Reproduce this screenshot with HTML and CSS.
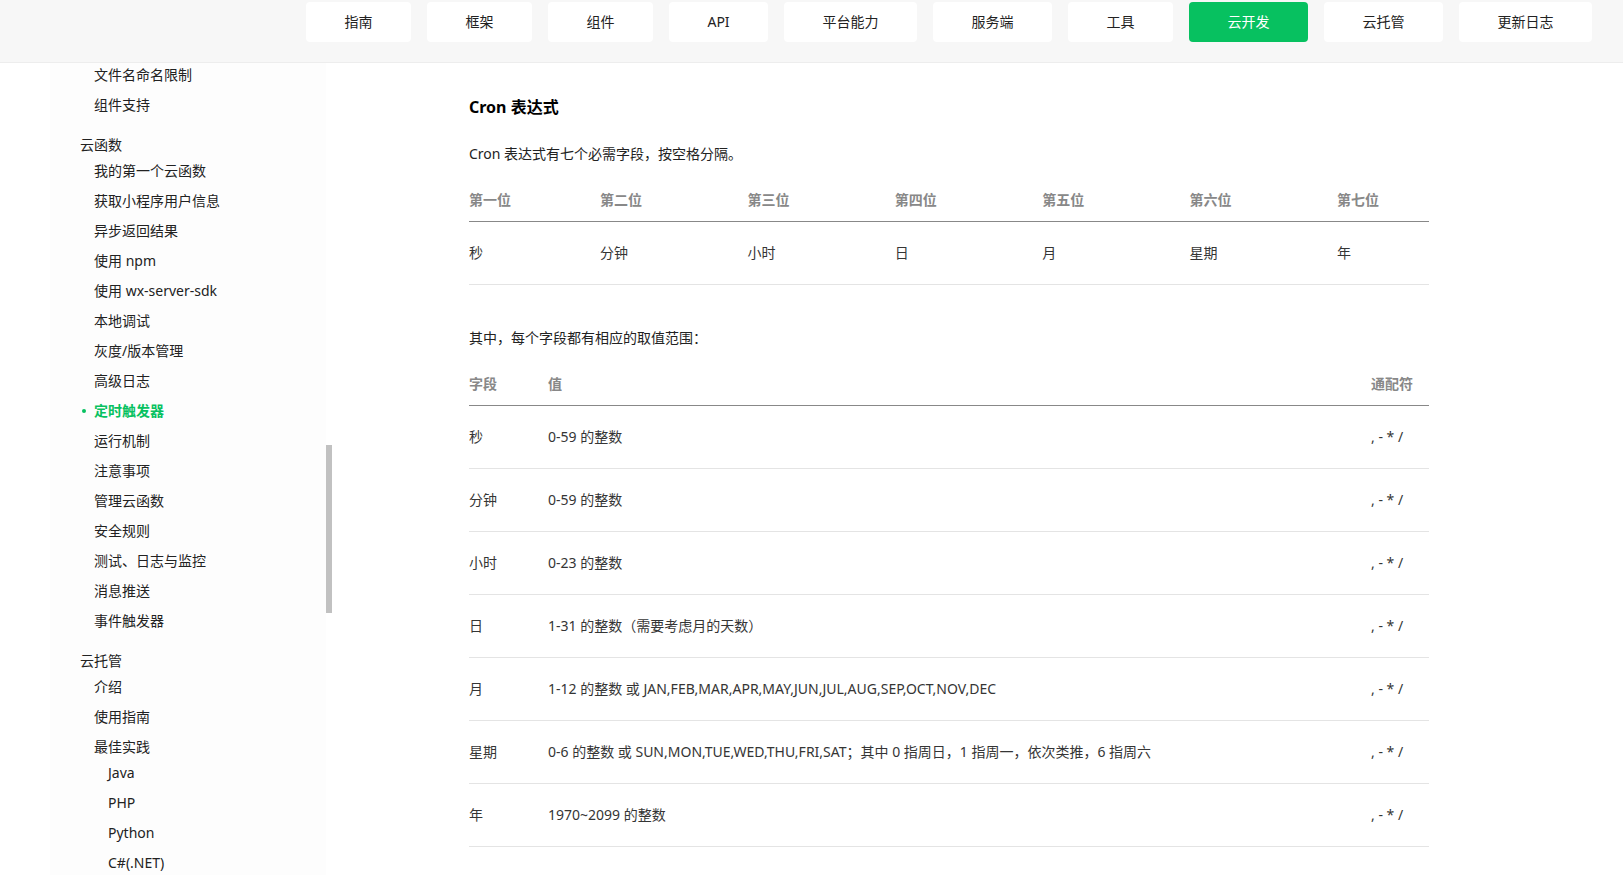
FILE: index.html
```html
<!DOCTYPE html>
<html lang="zh-CN">

<head>
    <meta charset="UTF-8">
    <meta name="viewport" content="width=device-width, initial-scale=1.0">
    <title>定时触发器</title>
    <link rel="stylesheet" href="styles.css">
</head>

<body>
    <header class="header">
        <nav class="tabs">
            <a class="tab" href="#">指南</a>
            <a class="tab" href="#">框架</a>
            <a class="tab" href="#">组件</a>
            <a class="tab" href="#">API</a>
            <a class="tab" href="#">平台能力</a>
            <a class="tab" href="#">服务端</a>
            <a class="tab" href="#">工具</a>
            <a class="tab active" href="#">云开发</a>
            <a class="tab" href="#">云托管</a>
            <a class="tab" href="#">更新日志</a>
        </nav>
    </header>
    <div class="page">
        <aside class="sidebar">
            <ul class="menu">
                <li><a href="#">文件名命名限制</a></li>
                <li><a href="#">组件支持</a></li>
            </ul>
            <h4 class="menu-title">云函数</h4>
            <ul class="menu">
                <li><a href="#">我的第一个云函数</a></li>
                <li><a href="#">获取小程序用户信息</a></li>
                <li><a href="#">异步返回结果</a></li>
                <li><a href="#">使用 npm</a></li>
                <li><a href="#">使用 wx-server-sdk</a></li>
                <li><a href="#">本地调试</a></li>
                <li><a href="#">灰度/版本管理</a></li>
                <li><a href="#">高级日志</a></li>
                <li><a class="current" href="#">定时触发器</a></li>
                <li><a href="#">运行机制</a></li>
                <li><a href="#">注意事项</a></li>
                <li><a href="#">管理云函数</a></li>
                <li><a href="#">安全规则</a></li>
                <li><a href="#">测试、日志与监控</a></li>
                <li><a href="#">消息推送</a></li>
                <li><a href="#">事件触发器</a></li>
            </ul>
            <h4 class="menu-title">云托管</h4>
            <ul class="menu">
                <li><a href="#">介绍</a></li>
                <li><a href="#">使用指南</a></li>
                <li>
                    <a href="#">最佳实践</a>
                    <ul class="submenu">
                        <li><a href="#">Java</a></li>
                        <li><a href="#">PHP</a></li>
                        <li><a href="#">Python</a></li>
                        <li><a href="#">C#(.NET)</a></li>
                    </ul>
                </li>
            </ul>
            <div class="scroll-thumb"></div>
        </aside>
        <main class="content">
            <h3>Cron 表达式</h3>
            <p>Cron 表达式有七个必需字段，按空格分隔。</p>
            <table class="fields">
                <thead>
                    <tr>
                        <th>第一位</th>
                        <th>第二位</th>
                        <th>第三位</th>
                        <th>第四位</th>
                        <th>第五位</th>
                        <th>第六位</th>
                        <th>第七位</th>
                    </tr>
                </thead>
                <tbody>
                    <tr>
                        <td>秒</td>
                        <td>分钟</td>
                        <td>小时</td>
                        <td>日</td>
                        <td>月</td>
                        <td>星期</td>
                        <td>年</td>
                    </tr>
                </tbody>
            </table>
            <p>其中，每个字段都有相应的取值范围：</p>
            <table class="ranges">
                <thead>
                    <tr>
                        <th>字段</th>
                        <th>值</th>
                        <th>通配符</th>
                    </tr>
                </thead>
                <tbody>
                    <tr>
                        <td>秒</td>
                        <td>0-59 的整数</td>
                        <td>, - * /</td>
                    </tr>
                    <tr>
                        <td>分钟</td>
                        <td>0-59 的整数</td>
                        <td>, - * /</td>
                    </tr>
                    <tr>
                        <td>小时</td>
                        <td>0-23 的整数</td>
                        <td>, - * /</td>
                    </tr>
                    <tr>
                        <td>日</td>
                        <td>1-31 的整数（需要考虑月的天数）</td>
                        <td>, - * /</td>
                    </tr>
                    <tr>
                        <td>月</td>
                        <td>1-12 的整数 或 JAN,FEB,MAR,APR,MAY,JUN,JUL,AUG,SEP,OCT,NOV,DEC</td>
                        <td>, - * /</td>
                    </tr>
                    <tr>
                        <td>星期</td>
                        <td>0-6 的整数 或 SUN,MON,TUE,WED,THU,FRI,SAT；其中 0 指周日，1 指周一，依次类推，6 指周六</td>
                        <td>, - * /</td>
                    </tr>
                    <tr>
                        <td>年</td>
                        <td>1970~2099 的整数</td>
                        <td>, - * /</td>
                    </tr>
                </tbody>
            </table>
        </main>
    </div>
</body>

</html>
```
FILE: styles.css
```css
* {
    box-sizing: border-box;
}

body {
    margin: 0;
    height: 100vh;
    display: flex;
    flex-direction: column;
    overflow: hidden;
    background: #fff;
    color: #222;
    font-family: "Noto Sans", "Noto Sans CJK SC", sans-serif;
    font-size: 14px;
    line-height: 22px;
}

a {
    color: inherit;
    text-decoration: none;
}

ul {
    margin: 0;
    padding: 0;
    list-style: none;
}

.header {
    flex: none;
    padding: 2px 31px 20px 306px;
    background: #f7f7f7;
    border-bottom: 1px solid #ededed;
}

.tabs {
    display: flex;
    gap: 16px;
}

.tab {
    flex: 1 1 auto;
    line-height: 40px;
    text-align: center;
    white-space: nowrap;
    padding: 0 36px;
    background: #fff;
    border-radius: 4px;
}

.tab.active {
    background: #07c160;
    color: #fff;
}

.page {
    flex: 1;
    min-height: 0;
    display: flex;
}

/* left menu */
.sidebar {
    position: relative;
    flex: none;
    width: 276px;
    margin-left: 50px;
    padding: 1px 0 0 30px;
    background: #fdfdfd;
}

.menu {
    padding-left: 14px;
}

.menu li {
    margin-bottom: 8px;
}

.menu a {
    display: block;
}

.menu-title {
    margin: 18px 0 4px;
    font-size: 14px;
    font-weight: normal;
}

.submenu {
    margin-top: 4px;
    padding-left: 14px;
}

.menu .current {
    position: relative;
    color: #07c160;
    font-weight: bold;
}

.current::before {
    content: "";
    position: absolute;
    left: -12px;
    top: 9px;
    width: 4px;
    height: 4px;
    border-radius: 50%;
    background: #07c160;
}

.scroll-thumb {
    position: absolute;
    left: 100%;
    top: 382px;
    width: 6px;
    height: 168px;
    background: #c1c1c1;
}

/* article */
.content {
    flex: 1;
    padding: 33px 194px 0 143px;
}

.content h3 {
    margin: 0 0 25px;
    color: #000;
    font-size: 16px;
    line-height: 22px;
}

.content p {
    margin: 0 0 24px;
}

table {
    width: 100%;
    table-layout: fixed;
    border-collapse: separate;
    border-spacing: 0;
    margin-bottom: 42px;
}

th,
td {
    padding: 0;
    text-align: left;
}

th {
    height: 33px;
    padding-bottom: 10px;
    color: #888;
    border-bottom: 1px solid #888;
}

td {
    height: 63px;
    color: #353535;
    border-bottom: 1px solid #e4e4e4;
}

.fields th:first-child {
    width: 131px;
}

.fields th:last-child {
    width: 92px;
}

.ranges th:first-child {
    width: 79px;
}

.ranges th:last-child {
    width: 58px;
}
```
